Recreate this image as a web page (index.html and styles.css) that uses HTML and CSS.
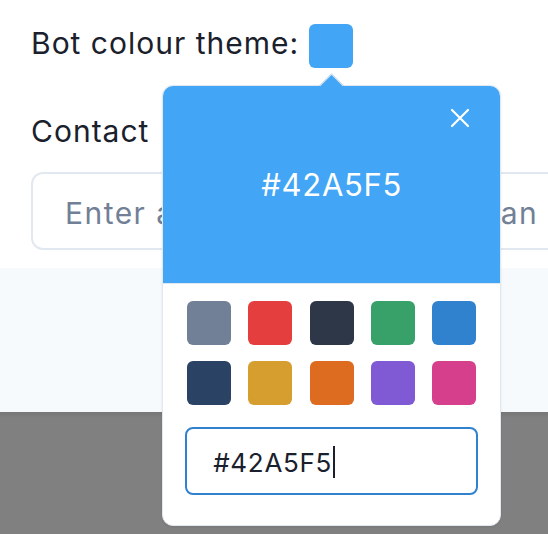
FILE: index.html
```html
<!DOCTYPE html>
<html lang="en">
<head>
<meta charset="utf-8">
<title>Bot settings</title>
<link rel="stylesheet" href="styles.css">
</head>
<body>
<div class="page">
  <section class="form">
    <div class="theme-row">
      <span class="label theme-label">Bot colour theme:</span>
      <div class="picker">
        <button class="trigger" aria-label="Pick colour"></button>
        <div class="popover" role="dialog">
          <div class="arrow"></div>
          <div class="pop-header">
            <button class="close" aria-label="Close">
              <svg viewBox="0 0 20 20" width="20" height="20"><path d="M2 2 L18 18 M18 2 L2 18" stroke="#fff" stroke-width="2.2" stroke-linecap="round" fill="none"/></svg>
            </button>
            <span class="hex">#42A5F5</span>
          </div>
          <div class="pop-body">
            <div class="swatches">
              <button class="sw" style="background:#718096"></button>
              <button class="sw" style="background:#E53E3E"></button>
              <button class="sw" style="background:#2D3748"></button>
              <button class="sw" style="background:#38A169"></button>
              <button class="sw" style="background:#3182CE"></button>
              <button class="sw" style="background:#2A4365"></button>
              <button class="sw" style="background:#D69E2E"></button>
              <button class="sw" style="background:#DD6B20"></button>
              <button class="sw" style="background:#805AD5"></button>
              <button class="sw" style="background:#D53F8C"></button>
            </div>
            <div class="hex-input" role="textbox">#42A5F5<span class="caret"></span></div>
          </div>
        </div>
      </div>
    </div>
    <label class="label contact-label">Contact</label>
    <input class="text-input" type="text" placeholder="Enter an email where staff can">
  </section>
  <div class="band-light"></div>
  <div class="band-dark"></div>
</div>
</body>
</html>
```

FILE: styles.css
```css
html, body {
  margin: 0;
  padding: 0;
  overflow: hidden;
  background: #ffffff;
}
body {
  font-family: "Inter", "Noto Sans", sans-serif;
  color: #1A202C;
}
.page {
  width: 548px;
  height: 534px;
  display: flex;
  flex-direction: column;
  overflow: hidden;
}
.form {
  padding: 24px 0 0 31px;
  height: 244px;
  box-sizing: border-box;
}
.theme-row {
  display: flex;
  align-items: center;
  gap: 10px;
  height: 44px;
}
.label {
  font-size: 30px;
  line-height: 45px;
  font-weight: 400;
  letter-spacing: 1px;
  color: #1A202C;
  display: block;
  white-space: nowrap;
}
.theme-label {
  margin-bottom: 5px;
}
.picker {
  position: relative;
  width: 44px;
  height: 44px;
}
.trigger {
  width: 44px;
  height: 44px;
  border: none;
  padding: 0;
  border-radius: 6px;
  background: #42A5F5;
  display: block;
}
.contact-label {
  margin-top: 41px;
}
.text-input {
  display: block;
  margin-top: 18px;
  width: 620px;
  height: 78px;
  box-sizing: border-box;
  border: 2px solid #E2E8F0;
  border-radius: 12px;
  padding: 4px 0 0 32px;
  font-family: "Inter", "Noto Sans", sans-serif;
  font-size: 30px;
  letter-spacing: 1.45px;
  color: #1A202C;
  background: #fff;
  outline: none;
}
.text-input::placeholder {
  color: #718096;
  opacity: 1;
}
.band-light {
  margin-top: 24px;
  height: 144px;
  background: #F7FAFC;
}
.band-dark {
  flex: 1;
  background: linear-gradient(#777777, #808080 6px);
}
.popover {
  position: absolute;
  left: -147px;
  top: 61px;
  width: 339px;
  box-sizing: border-box;
  background: #fff;
  border: 1px solid #E2E8F0;
  border-radius: 11px;
  box-shadow: 0 1px 3px rgba(0,0,0,0.08);
  z-index: 10;
}
.arrow {
  position: absolute;
  left: 160px;
  top: -9px;
  width: 16px;
  height: 16px;
  background: #42A5F5;
  border-top: 1px solid #E2E8F0;
  border-left: 1px solid #E2E8F0;
  transform: rotate(45deg);
  z-index: 1;
}
.pop-header {
  position: relative;
  height: 198px;
  box-sizing: border-box;
  background: #42A5F5;
  border-bottom: 1px solid #E2E8F0;
  border-radius: 10px 10px 0 0;
  display: flex;
  align-items: center;
  justify-content: center;
  z-index: 2;
}
.hex {
  color: #fff;
  font-size: 31px;
  line-height: 40px;
  letter-spacing: 0.7px;
}
.close {
  position: absolute;
  top: 22px;
  right: 30px;
  width: 20px;
  height: 20px;
  padding: 0;
  border: none;
  background: transparent;
  display: block;
}
.close svg {
  display: block;
}
.pop-body {
  padding: 17px 24px 30px 24px;
}
.swatches {
  display: grid;
  grid-template-columns: repeat(5, 44px);
  justify-content: space-between;
  row-gap: 16px;
}
.sw {
  width: 44px;
  height: 44px;
  border: none;
  padding: 0;
  border-radius: 6px;
  display: block;
}
.hex-input {
  margin: 22px -2px 0 -2px;
  height: 68px;
  box-sizing: border-box;
  border: 2px solid #3182CE;
  border-radius: 8px;
  padding: 2px 0 0 26px;
  font-size: 26px;
  letter-spacing: 0.7px;
  color: #1A202C;
  display: flex;
  align-items: center;
}
.caret {
  display: inline-block;
  width: 2px;
  height: 32px;
  background: #1A202C;
  margin-left: 1px;
}
```
